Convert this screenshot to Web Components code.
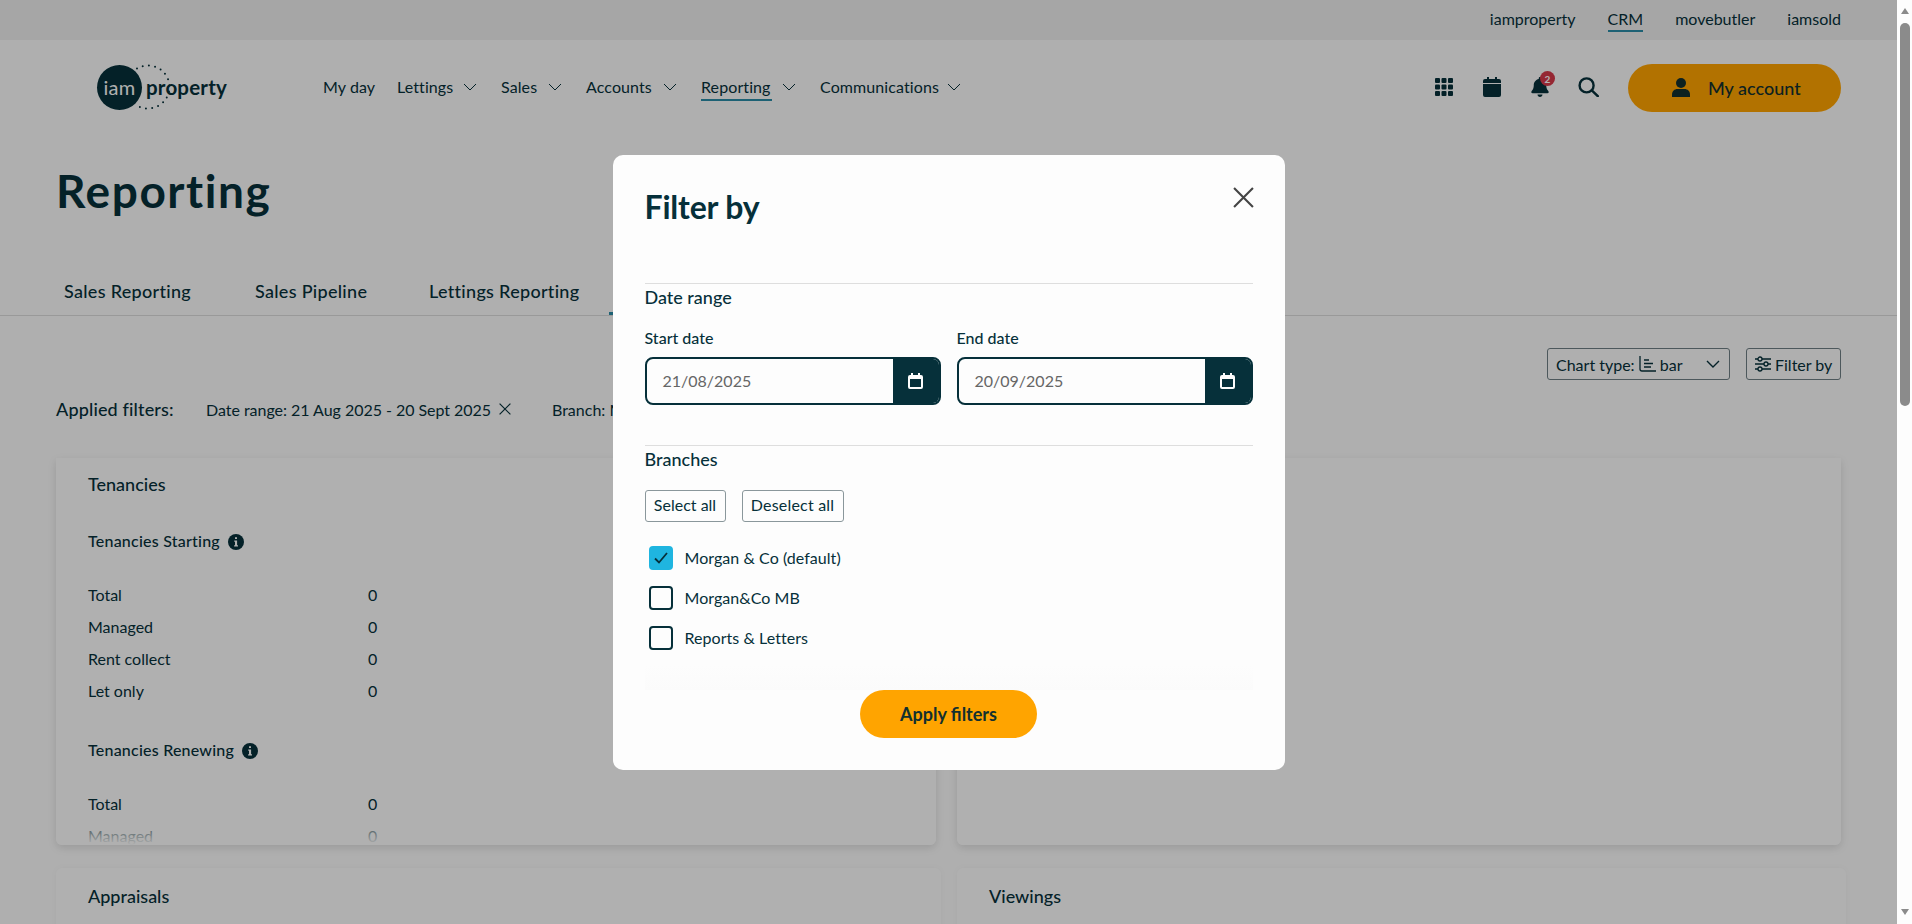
<!DOCTYPE html>
<html lang="en"><head><meta charset="utf-8"><title>Reporting</title>
<style>
html,body{margin:0;height:100%;overflow:hidden;background:#fdfdfd}
body{font-family:"Lato","Liberation Sans",sans-serif;color:#06303a}
</style></head>
<body>
<app-shell>
  <top-bar></top-bar>
  <main-nav></main-nav>
  <page-title>Reporting</page-title>
  <tab-bar></tab-bar>
  <filter-toolbar></filter-toolbar>
  <applied-filters></applied-filters>
  <card-grid>
    <report-card narrow title="Tenancies">
      <stat-group title="Tenancies Starting" rows="Total,Managed,Rent collect,Let only"></stat-group>
      <stat-group title="Tenancies Renewing" rows="Total,Managed"></stat-group>
    </report-card>
    <report-card narrow></report-card>
    <report-card low title="Appraisals"></report-card>
    <report-card low title="Viewings"></report-card>
  </card-grid>
  <filter-modal slot="overlay"></filter-modal>
</app-shell>
<script>
const CHEV='<svg width="14" height="8" viewBox="0 0 14 8" fill="none" stroke="currentColor" stroke-width="1"><path d="M1 1l6 6 6-6"/></svg>';
const X='<svg width="{s}" height="{s}" viewBox="0 0 20 20" fill="none" stroke="currentColor" stroke-width="{w}"><path d="M1 1l18 18M19 1L1 19"/></svg>';
const INFO='<svg width="16" height="16" viewBox="0 0 16 16"><circle cx="8" cy="8" r="8" fill="#06303a"/><path fill="#fdfdfd" d="M7 3.2h2v1.9H7zM6.2 6.6h2.9v4.6h.9v1.2H6.1v-1.2h.9V7.8h-.8z"/></svg>';
const CAL='<svg width="15" height="16" viewBox="0 0 15 16"><path fill="#fdfdfd" d="M3 0h2v2h5V0h2v2h1a2 2 0 0 1 2 2v10a2 2 0 0 1-2 2H2a2 2 0 0 1-2-2V4a2 2 0 0 1 2-2h1zM2 6v8h11V6z"/></svg>';
function def(name,html){
  customElements.define(name,class extends HTMLElement{
    connectedCallback(){
      if(this.shadowRoot)return;
      const r=this.attachShadow({mode:'open'});
      r.innerHTML=typeof html==='function'?html(this):html;
    }
  });
}
def('app-shell',`<style>
:host{display:flex;height:924px;width:1912px;overflow:hidden}
.page{position:relative;width:1897px;height:924px;overflow:hidden;background:#fbfbfb;flex:none}
.veil{position:absolute;inset:0;background:rgba(0,0,0,.3)}
.overlay{position:absolute;inset:0;display:flex;justify-content:center;align-items:flex-start;padding-top:155px;box-sizing:border-box}
</style>
<div class="page"><slot></slot><div class="veil"></div><div class="overlay"><slot name="overlay"></slot></div></div>
<fake-scrollbar></fake-scrollbar>`);
def('fake-scrollbar',`<style>
:host{display:flex;flex-direction:column;align-items:center;width:15px;height:924px;background:#fdfdfd;position:relative}
.up{width:0;height:0;border:4.5px solid transparent;border-top:0;border-bottom:6px solid #8b8b8b;margin-top:8px}
.thumb{width:10px;height:383px;border-radius:5px;background:#8b8b8b;margin-top:9px}
.dn{width:0;height:0;border:4.5px solid transparent;border-bottom:0;border-top:6px solid #8b8b8b;margin-top:auto;margin-bottom:9px}
</style><div class="up"></div><div class="thumb"></div><div class="dn"></div>`);
def('top-bar',`<style>
:host{display:flex;justify-content:flex-end;height:40px;background:#eeeeee;padding-right:56px;gap:32px;font-size:16px;align-items:flex-start;box-sizing:border-box}
span{line-height:22px;padding-top:8px;height:24px;display:block}
.on{border-bottom:2px solid #2a8ca6;height:22px}
</style><span>iamproperty</span><span class="on">CRM</span><span>movebutler</span><span>iamsold</span>`);
def('main-nav',`<style>
:host{display:flex;align-items:center;height:94px;padding:0 56px 0 97px;font-size:16px}
.logo{position:relative;width:131px;height:46px;display:flex;align-items:center;flex:none}
.disc{width:45px;height:45px;border-radius:50%;background:#06303a;color:#fdfdfd;font-size:20px;display:flex;align-items:center;justify-content:center;letter-spacing:.2px}
.word{font-size:20.5px;font-weight:700;margin-left:4px;letter-spacing:.2px}
.dots{position:absolute;left:25px;top:0}
nav{display:flex;align-items:center;margin-left:95px;gap:24px}
.i{display:flex;align-items:center;gap:10px}
.i span{display:block;line-height:22px;padding:2px 0 1px;border-bottom:2px solid transparent;white-space:nowrap;letter-spacing:.1px}
.i.on span{border-bottom-color:#2a8ca6}
.first{margin-right:-1px}
.right{margin-left:auto;display:flex;align-items:center}
.ic{width:48px;display:flex;justify-content:center;position:relative;height:22px;align-items:center}
.badge{position:absolute;left:24px;top:-5px;width:15px;height:15px;border-radius:50%;background:#d6384a;color:#fff;font-size:10px;font-weight:700;display:flex;align-items:center;justify-content:center}
.acc{margin:2px 0 0 16px;width:213px;height:48px;border-radius:24px;background:#ffa400;display:flex;align-items:center;padding:0 0 1px 44px;box-sizing:border-box;gap:18px;font-size:18px;font-weight:500;color:#12302f}
</style>
<div class="logo"><div class="disc">iam</div><div class="word">property</div>
<svg class="dots" width="50" height="46" viewBox="0 0 50 46" fill="none" stroke="#06303a" stroke-width="2" stroke-linecap="round" stroke-dasharray="0 6.2"><path d="M15 4.500A21.500 21.500 0 1 1 15 41.500"/></svg></div>
<nav>
<div class="i first"><span style="width:51px">My day</span></div>
<div class="i"><span style="width:56px">Lettings</span>${CHEV}</div>
<div class="i"><span style="width:37px">Sales</span>${CHEV}</div>
<div class="i"><span style="width:67px">Accounts</span>${CHEV}</div>
<div class="i on"><span style="width:71px">Reporting</span>${CHEV}</div>
<div class="i"><span style="width:117px">Communications</span>${CHEV}</div>
</nav>
<div class="right">
<div class="ic"><svg width="18" height="18" viewBox="0 0 18 18" fill="#06303a"><rect width="5" height="5" rx="1"/><rect x="6.500" width="5" height="5" rx="1"/><rect x="13" width="5" height="5" rx="1"/><rect y="6.500" width="5" height="5" rx="1"/><rect x="6.500" y="6.500" width="5" height="5" rx="1"/><rect x="13" y="6.500" width="5" height="5" rx="1"/><rect y="13" width="5" height="5" rx="1"/><rect x="6.500" y="13" width="5" height="5" rx="1"/><rect x="13" y="13" width="5" height="5" rx="1"/></svg></div>
<div class="ic"><svg width="18" height="20" viewBox="0 0 18 20" fill="#06303a"><path d="M4 0h2v2h6V0h2v2h2a2 2 0 0 1 2 2v2H0V4a2 2 0 0 1 2-2h2zM0 7h18v11a2 2 0 0 1-2 2H2a2 2 0 0 1-2-2z"/></svg></div>
<div class="ic"><svg width="18" height="20" viewBox="0 0 448 512" fill="#06303a"><path d="M224 0c-17.700 0-32 14.300-32 32V51.200C119 66 64 130.600 64 208v18.800c0 47-17.300 92.400-48.500 127.600l-7.400 8.300c-8.400 9.400-10.400 22.900-5.300 34.400S19.400 416 32 416H416c12.600 0 24-7.400 29.200-18.900s3.100-25-5.300-34.400l-7.400-8.300C401.300 319.200 384 273.900 384 226.800V208c0-77.400-55-142-128-156.800V32c0-17.700-14.300-32-32-32zm45.300 493.300c12-12 18.700-28.300 18.700-45.300H224 160c0 17 6.700 33.300 18.700 45.300s28.300 18.700 45.300 18.700s33.300-6.700 45.300-18.700z"/></svg><span class="badge">2</span></div>
<div class="ic"><svg width="21" height="20" viewBox="0 0 21 20" fill="none" stroke="#06303a" stroke-width="2.400"><circle cx="8.600" cy="8.400" r="7"/><path d="M13.800 13.400l6 5.800" stroke-linecap="round"/></svg></div>
<div class="acc"><svg width="18" height="19" viewBox="0 0 18 19" fill="#12302f"><circle cx="9" cy="5" r="5"/><path d="M0 19v-2.500c0-3.300 2.500-5.500 5.500-5.500h7c3 0 5.500 2.200 5.500 5.500V19z"/></svg><span>My account</span></div>
</div>`);
def('page-title',`<style>
:host{display:flex;align-items:center;height:116px;padding:0 0 4px 56px;font-size:46px;font-weight:700;box-sizing:border-box;letter-spacing:1.55px}
</style><slot></slot>`);
def('tab-bar',`<style>
:host{display:flex;height:66px;box-sizing:border-box;border-bottom:1px solid #dcdcdc;padding:29px 0 0 64px;font-size:18px;font-weight:500;letter-spacing:.3px}
span{line-height:24px;display:block;white-space:nowrap}
.a{margin-right:64px}
.act{position:relative;width:200px;height:35px;margin-left:-32px}
.act::after{content:"";position:absolute;left:0;right:0;bottom:-1px;height:3px;background:#2a8ca6}
</style><span class="a" style="width:127px">Sales Reporting</span><span class="a" style="width:110px">Sales Pipeline</span><span class="a" style="width:148px">Lettings Reporting</span><div class="act"></div>`);
def('filter-toolbar',`<style>
:host{display:flex;justify-content:flex-end;gap:16px;margin-top:32px;padding-right:56px;height:32px;font-size:16px}
.b{display:flex;align-items:center;height:32px;box-sizing:border-box;border:1px solid #6f7f84;border-radius:3px;padding:0 8px;white-space:nowrap}
.sel{width:183px;position:relative}
.sel svg.c{position:absolute;right:9px;top:11px}
.flt{width:95px;padding:0 0 0 8px}
svg{flex:none}
</style>
<div class="b sel">Chart type:&nbsp;<svg width="17" height="16" viewBox="0 0 17 16" fill="none" stroke="#06303a" stroke-width="1.300"><path d="M1 0v13a2 2 0 0 0 2 2h14M5 4h5M5 7.500h9M5 11h7"/></svg>&nbsp;bar<svg class="c" width="14" height="9" viewBox="0 0 14 9" fill="none" stroke="#06303a" stroke-width="1.400"><path d="M1 1l6 6 6-6"/></svg></div>
<div class="b flt"><svg width="16" height="16" viewBox="0 0 16 16" fill="none" stroke="#06303a" stroke-width="1.300" style="margin-right:4px"><path d="M0 3h3M7 3h9M0 8h9M13 8h3M0 13h3M7 13h9"/><circle cx="5" cy="3" r="2"/><circle cx="11" cy="8" r="2"/><circle cx="5" cy="13" r="2"/></svg>Filter by</div>`);
def('applied-filters',()=>`<style>
:host{display:flex;align-items:center;height:24px;margin-top:17px;padding-left:56px;white-space:nowrap;font-size:16px}
b{font-size:18px;font-weight:500;margin-right:33px;letter-spacing:.15px;width:117px}
span{display:block}
.d{width:283px;letter-spacing:-.03px}
svg{margin:0 41px 0 10px;flex:none}
</style><b>Applied filters:</b><span class="d">Date range: 21 Aug 2025 - 20 Sept 2025</span>${X.replace(/\{s\}/g,'12').replace('{w}','2')}<span>Branch: Morgan &amp; Co</span>`);
def('card-grid',`<style>
:host{display:grid;grid-template-columns:885px 889px;column-gap:16px;row-gap:23px;margin-top:37px;padding-left:56px}
</style><slot></slot>`);
def('report-card',h=>`<style>
:host{display:block;position:relative;height:387px;overflow:hidden;padding:14px 32px 0;box-sizing:border-box;border-radius:0 0 6px 6px;background:#fdfdfd;box-shadow:0 3px 8px rgba(0,0,0,.12)}
:host([narrow]){margin-right:5px}
:host([low]){padding-top:16px;border-radius:6px;box-shadow:0 0 6px rgba(0,0,0,.04)}
h2{margin:0;font-size:18px;font-weight:500;line-height:24px}
.fade{position:absolute;left:0;right:0;bottom:0;height:30px;background:linear-gradient(rgba(253,253,253,0),#fdfdfd)}
</style><h2>${h.getAttribute('title')||''}</h2><slot></slot><div class="fade"></div>`);
def('stat-group',h=>`<style>
:host{display:block;padding-top:33px;font-size:16px}
h3{margin:0 0 25px;font-size:16px;font-weight:500;line-height:24px;display:flex;align-items:center;gap:8px;letter-spacing:.22px}
.r{display:flex;height:32px;align-items:center}
.r span:first-child{width:280px}
svg{margin-top:1px}
:host(:last-of-type){padding-top:32px}
</style><h3>${h.getAttribute('title')}${INFO}</h3>${h.getAttribute('rows').split(',').map(x=>`<div class="r"><span>${x}</span><span>0</span></div>`).join('')}`);
def('filter-modal',`<style>
:host{display:block;width:672px;height:615px;box-sizing:border-box;padding:32px 32px;background:#fdfdfd;border-radius:10px}
header{display:flex;justify-content:space-between;align-items:flex-start;height:40px;margin-bottom:56px}
h1{margin:0;font-size:32px;line-height:40px;font-weight:700;letter-spacing:-.2px}
.x{color:#444;display:block;margin-right:-1px}
hr{border:0;border-top:1px solid #dedede;margin:0;height:0}
h2{margin:0;font-size:18px;line-height:27px;font-weight:500;padding-bottom:1px}
.dates{display:grid;grid-template-columns:296px 296px;column-gap:16px;margin-top:14px;margin-bottom:40px}
.btns{display:flex;gap:16px;margin-top:16px}
.btn{height:32px;box-sizing:border-box;border:1px solid #8a979b;border-radius:3px;display:flex;align-items:center;justify-content:center;font-size:16px;padding-bottom:3px}
.checks{display:flex;flex-direction:column;gap:16px;margin:24px 0 0 4px}
.fade{height:25px;margin-top:15px;background:linear-gradient(#fdfdfd,#fbfbfb)}
.apply{display:block;width:177px;height:48px;line-height:48px;border-radius:24px;background:#ffa400;text-align:center;font-size:18px;font-weight:700;margin:0 auto;color:#12302f}
</style>
<header><h1>Filter by</h1><span class="x">${X.replace(/\{s\}/g,'21').replace('{w}','2')}</span></header>
<hr><h2>Date range</h2>
<div class="dates"><date-field label="Start date" value="21/08/2025"></date-field><date-field label="End date" value="20/09/2025"></date-field></div>
<hr><h2>Branches</h2>
<div class="btns"><div class="btn" style="width:81px">Select all</div><div class="btn" style="width:102px;letter-spacing:.2px">Deselect all</div></div>
<div class="checks"><branch-check checked label="Morgan &amp; Co (default)"></branch-check><branch-check label="Morgan&amp;Co MB"></branch-check><branch-check label="Reports &amp; Letters"></branch-check></div>
<div class="fade"></div>
<div class="apply">Apply filters</div>`);
def('date-field',h=>`<style>
:host{display:block;font-size:16px}
label{display:block;line-height:24px;margin-bottom:7px;font-weight:500}
.f{display:flex;height:48px;box-sizing:border-box;border:2px solid #06303a;border-radius:8px;overflow:hidden}
.v{flex:1;padding-left:16px;line-height:44px;color:#666}
.b{width:46px;background:#06303a;display:flex;align-items:center;justify-content:center}
</style><label>${h.getAttribute('label')}</label><div class="f"><div class="v">${h.getAttribute('value')}</div><div class="b">${CAL}</div></div>`);
def('branch-check',h=>{const c=h.hasAttribute('checked');return `<style>
:host{display:flex;align-items:center;gap:12px;font-size:16px;height:24px}
span{display:block;padding-bottom:2px;letter-spacing:.05px}
.c{width:24px;height:24px;box-sizing:border-box;border:2px solid ${c?'#1fb5e0':'#06303a'};border-radius:4px;background:${c?'#1fb5e0':'transparent'};display:flex;align-items:center;justify-content:center}
</style><div class="c">${c?'<svg width="14" height="12" viewBox="0 0 14 12" fill="none" stroke="#06303a" stroke-width="1.800"><path d="M1 6.500l4 4L13 1"/></svg>':''}</div><span>${h.getAttribute('label').replace(/&/g,'&amp;')}</span>`});
</script>
</body></html>
